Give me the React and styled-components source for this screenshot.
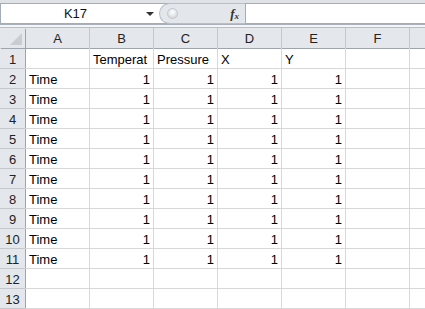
import styled, { createGlobalStyle } from 'styled-components';

const GlobalStyle = createGlobalStyle`
  body {
    margin: 0;
    background: #ffffff;
    overflow: hidden;
    font-family: "Liberation Sans", Arial, sans-serif;
  }
`

const columns = ['A', 'B', 'C', 'D', 'E', 'F', '']

const rows = [
  ['', 'Temperat', 'Pressure', 'X', 'Y', '', ''],
  ...Array.from({ length: 10 }, () => ['Time', 1, 1, 1, 1, '', '']),
  ['', '', '', '', '', '', ''],
  ['', '', '', '', '', '', ''],
]

function App() {
  return (
    <Window>
      <GlobalStyle />
      <FormulaBar>
        <NameBox>
          <NameText>K17</NameText>
          <Caret />
        </NameBox>
        <Buttons>
          <Knob />
          <Fx>f<sub>x</sub></Fx>
        </Buttons>
        <Input />
      </FormulaBar>
      <Divider />
      <Sheet>
        <Corner>
          <CornerTriangle />
        </Corner>
        {columns.map((c, i) => (
          <ColHead key={i}>{c}</ColHead>
        ))}
        {rows.map((row, r) => (
          <Row key={r} cells={row} num={r + 1} />
        ))}
      </Sheet>
    </Window>
  );
}

function Row({ cells, num }) {
  return (
    <>
      <RowHead>{num}</RowHead>
      {cells.map((v, i) => (
        <Cell key={i} $num={typeof v === 'number'}>{v}</Cell>
      ))}
    </>
  )
}

const Window = styled.div`
  width: 425px;
  height: 309px;
  overflow: hidden;
  background: #fff;
`
const FormulaBar = styled.div`
  display: flex;
  height: 21px;
  padding-top: 3px;
  background: #dfe3e8;
`
const NameBox = styled.div`
  width: 159px;
  display: flex;
  align-items: center;
  background: #fff;
  border: 1px solid #a4acb6;
  border-right: none;
  box-sizing: border-box;
`
const NameText = styled.span`
  flex: 1;
  text-align: center;
  font-size: 13px;
  color: #111;
  padding-left: 4px;
`
const Caret = styled.span`
  width: 0;
  height: 0;
  margin-right: 5px;
  border-left: 4px solid transparent;
  border-right: 4px solid transparent;
  border-top: 4px solid #333;
`
const Buttons = styled.div`
  width: 86px;
  display: flex;
  align-items: center;
  justify-content: space-between;
  background: #fff;
  border-top: 1px solid #a4acb6;
  border-bottom: 1px solid #a4acb6;
  box-sizing: border-box;
  position: relative;
  &::before {
    content: '';
    position: absolute;
    left: 0;
    right: 0;
    top: 0;
    bottom: 0;
    background: #e3e6ea;
    border: 1px solid #b9bec5;
    border-right: none;
    border-radius: 11px 0 0 11px;
    margin-top: -1px;
    margin-bottom: -1px;
  }
`
const Knob = styled.span`
  position: relative;
  margin-left: 8px;
  width: 9px;
  height: 9px;
  border-radius: 50%;
  background: radial-gradient(circle at 50% 35%, #ffffff, #c9cdd3);
  border: 1px solid #c3c8ce;
`
const Fx = styled.span`
  position: relative;
  margin-right: 6px;
  font-family: "Liberation Serif", "Times New Roman", serif;
  font-style: italic;
  font-weight: bold;
  font-size: 13px;
  color: #333;
  sub {
    font-size: 9px;
    vertical-align: -1px;
  }
`
const Input = styled.div`
  flex: 1;
  background: #fff;
  border: 1px solid #a4acb6;
  border-right: none;
`
const Divider = styled.div`
  height: 2px;
  border-top: 1px solid #a9b0b9;
  border-bottom: 1px solid #b8bec6;
  background: #f4f6f8;
`
const Sheet = styled.div`
  display: grid;
  grid-template-columns: 25px repeat(7, 63px);
  grid-template-rows: 20px;
  grid-auto-rows: 19px;
  column-gap: 1px;
  row-gap: 1px;
  background: #d8d8d8;
  border-bottom: 1px solid #d8d8d8;
`
const Corner = styled.div`
  position: relative;
  background: #e4e7eb;
  box-shadow: 1px 1px 0 #9ea4ab;
  z-index: 1;
`
const CornerTriangle = styled.div`
  position: absolute;
  right: 3px;
  bottom: 3px;
  width: 0;
  height: 0;
  border-left: 12px solid transparent;
  border-bottom: 12px solid #c9cdd2;
`
const ColHead = styled.div`
  background: #e4e7eb;
  display: flex;
  align-items: center;
  justify-content: center;
  font-size: 13px;
  color: #222;
  box-shadow: 0 1px 0 #9ea4ab, 1px 0 0 #c4c8cd;
`
const RowHead = styled.div`
  background: #e4e7eb;
  display: flex;
  align-items: center;
  justify-content: center;
  padding-top: 1px;
  font-size: 13px;
  color: #222;
  box-shadow: 1px 0 0 #9ea4ab, 0 1px 0 #c4c8cd;
`
const Cell = styled.div`
  background: #fff;
  display: flex;
  align-items: center;
  justify-content: ${p => (p.$num ? 'flex-end' : 'flex-start')};
  padding: 1px 3px 0 3px;
  font-size: 13px;
  color: #000;
  white-space: nowrap;
  overflow: hidden;
`

export default App;
